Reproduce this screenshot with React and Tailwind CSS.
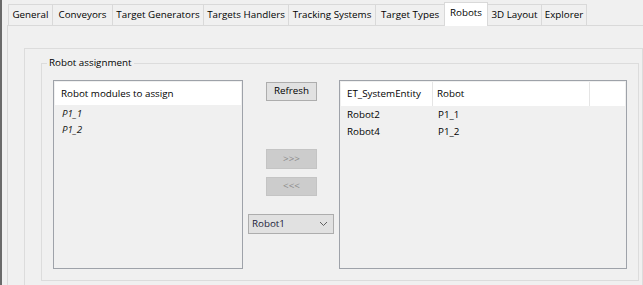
import React from "react";

const tabs = [
  { name: "General", w: 45 },
  { name: "Conveyors", w: 61 },
  { name: "Target Generators", w: 92 },
  { name: "Targets Handlers", w: 86 },
  { name: "Tracking Systems", w: 88 },
  { name: "Target Types", w: 70 },
  { name: "Robots", w: 44, active: true },
  { name: "3D Layout", w: 55 },
  { name: "Explorer", w: 46 },
];

const font = { fontFamily: '"Open Sans", "Noto Sans", sans-serif' };

const Tab = ({ name, w, active }) => (
  <div
    style={{ width: w }}
    className={
      active
        ? "h-[24px] -mb-px -ml-px z-10 bg-white border border-b-0 border-[#d9d9d9] flex items-center justify-center pb-[2px]"
        : "h-[21px] -ml-px bg-[#f0f0f0] border border-b-0 border-[#d9d9d9] flex items-center justify-center"
    }
  >
    <span className="whitespace-nowrap">{name}</span>
  </div>
);

export default function App() {
  return (
    <div
      style={font}
      className="w-[643px] h-[285px] overflow-hidden bg-[#f0f0f0] border-l-2 border-[#6a6a6a] text-[9.8px] text-black flex flex-col"
    >
      {/* Tab strip */}
      <div className="h-[25px] pl-[6px] flex items-end shrink-0">
        <div className="flex items-end ml-px">
          {tabs.map((t) => (
            <Tab key={t.name} {...t} />
          ))}
        </div>
      </div>

      {/* Tab page */}
      <div className="ml-[5px] w-[700px] flex-1 border border-[#d9d9d9] bg-[#f0f0f0] pl-[16px] pt-[22px]">
        <div className="w-[619px] h-[300px] border-l border-t border-r border-[#dcdcdc] pl-[16px] pt-[14px]">
          {/* Group box */}
          <div className="relative w-[598px] border border-[#dcdcdc] pl-[11px] pr-[10px] pt-[16px] pb-[11px] flex">
            <span className="absolute -top-[8px] left-[5px] px-[2px] bg-[#f0f0f0] leading-[14px]">
              Robot assignment
            </span>

            {/* Left list */}
            <div className="w-[190px] h-[189px] border border-[#9ea2a9] bg-[#f0f0f0] p-px">
              <div className="h-[23px] bg-white flex items-center pl-[6px] pt-px">
                Robot modules to assign
              </div>
              <div className="pl-[7px] pt-[1px] italic leading-[16px] text-[#202020]">
                <div>P1_1</div>
                <div>P1_2</div>
              </div>
            </div>

            {/* Middle buttons */}
            <div className="w-[96px] flex flex-col">
              <button className="ml-[23px] mt-[2px] w-[51px] h-[19px] bg-[#e1e1e1] border border-[#adadad] flex items-center justify-center">
                Refresh
              </button>
              <button className="ml-[23px] mt-[48px] w-[51px] h-[20px] bg-[#cccccc] border border-[#c4c4c4] text-[#8a8a8a] flex items-center justify-center">
                &gt;&gt;&gt;
              </button>
              <button className="ml-[23px] mt-[8px] w-[51px] h-[19px] bg-[#cccccc] border border-[#c4c4c4] text-[#8a8a8a] flex items-center justify-center">
                &lt;&lt;&lt;
              </button>
              <div className="ml-[5px] mt-[18px] w-[86px] h-[20px] bg-[#e1e1e1] border border-[#adadad] flex items-center justify-between pl-[3px] pr-[5px] text-[#1b1b3a]">
                <span>Robot1</span>
                <svg width="9" height="6" viewBox="0 0 9 6" fill="none">
                  <path d="M1 1l3.5 3.5L8 1" stroke="#606060" strokeWidth="1" />
                </svg>
              </div>
            </div>

            {/* Right table */}
            <div className="w-[288px] h-[189px] border border-[#9ea2a9] bg-[#f0f0f0] p-px">
              <div className="h-[24px] bg-white flex">
                <div className="w-[92px] border-r border-[#e5e5e5] flex items-center pl-[6px]">
                  ET_SystemEntity
                </div>
                <div className="w-[157px] border-r border-[#e5e5e5] flex items-center pl-[4px]">
                  Robot
                </div>
                <div className="flex-1" />
              </div>
              <div className="pt-[1px] leading-[16.5px]">
                <div className="flex">
                  <div className="w-[92px] pl-[6px]">Robot2</div>
                  <div className="pl-[5px]">P1_1</div>
                </div>
                <div className="flex">
                  <div className="w-[92px] pl-[6px]">Robot4</div>
                  <div className="pl-[5px]">P1_2</div>
                </div>
              </div>
            </div>
          </div>
        </div>
      </div>
    </div>
  );
}
